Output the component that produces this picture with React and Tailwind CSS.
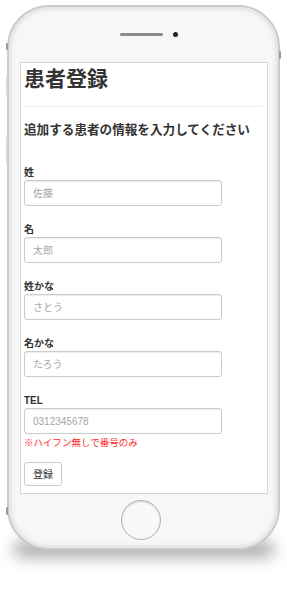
const fields = [
  { label: "姓", placeholder: "佐藤" },
  { label: "名", placeholder: "太郎" },
  { label: "姓かな", placeholder: "さとう" },
  { label: "名かな", placeholder: "たろう" },
  { label: "TEL", placeholder: "0312345678" },
];

function Field({ label, placeholder }) {
  return (
    <div className="flex flex-col">
      <label className="text-[10px] leading-[12px] font-bold text-[#333] mb-[1px]">
        {label}
      </label>
      <input
        type="text"
        placeholder={placeholder}
        className="w-[198px] h-[26px] px-[8px] text-[10px] text-[#555] placeholder:text-[#a5a5a5] bg-white border border-[#ccc] rounded-[3px] shadow-[inset_0_1px_1px_rgba(0,0,0,0.075)] outline-none"
      />
    </div>
  );
}

export default function App() {
  return (
    <div
      className="w-[287px] h-[595px] bg-white overflow-hidden"
      style={{ fontFamily: '"Liberation Sans", "Noto Sans CJK JP", sans-serif' }}
    >
      <div className="relative z-10 ml-[7px] mt-[5px] w-[273px] h-[545px] rounded-[42px] border-2 border-[#cacaca] bg-[#f7f7f7] shadow-[inset_0_0_0_3px_#e8e8e8,inset_0_0_4px_4px_#efefef] flex flex-col">
        {/* side buttons */}
        <div className="absolute left-[-3px] top-[36px] w-[2px] h-[7px] bg-[#9a9a9a] rounded-sm" />
        <div className="absolute left-[-3px] top-[70px] w-[2px] h-[18px] bg-[#d6d6d6] rounded-sm" />
        <div className="absolute left-[-3px] top-[130px] w-[2px] h-[26px] bg-[#d6d6d6] rounded-sm" />
        <div className="absolute left-[-3px] top-[500px] w-[2px] h-[8px] bg-[#9a9a9a] rounded-sm" />
        <div className="absolute right-[-3px] top-[44px] w-[2px] h-[8px] bg-[#9a9a9a] rounded-sm" />

        {/* speaker + camera */}
        <div className="h-[55px] flex items-start pt-[25px] pl-[111px]">
          <div className="flex items-center gap-[10px]">
            <div className="w-[43px] h-[3px] rounded-full bg-[#8a8a8a]" />
            <div className="w-[5px] h-[5px] rounded-full bg-[#222]" />
          </div>
        </div>

        {/* screen */}
        <div className="ml-[11px] w-[248px] h-[432px] bg-white border border-[#d6d6d6] pl-[3px] pr-[4px] pt-[3px] flex flex-col">
          <h1 className="text-[21px] leading-[26px] font-bold text-[#333]">患者登録</h1>
          <div className="mt-[14px] border-t border-[#eee]" />
          <h2 className="mt-[15px] text-[12.6px] leading-[16px] font-bold text-[#333]">
            追加する患者の情報を入力してください
          </h2>
          <div className="mt-[29px] flex flex-col gap-[18px]">
            {fields.map((f) => (
              <Field key={f.label} label={f.label} placeholder={f.placeholder} />
            ))}
          </div>
          <p className="mt-[3px] text-[9.5px] leading-[12px] text-[#ff2a2a]">
            ※ハイフン無しで番号のみ
          </p>
          <button className="mt-[13px] w-[38px] h-[24px] text-[10px] text-[#333] bg-white border border-[#ccc] rounded-[3px]">
            登録
          </button>
        </div>

        {/* home button */}
        <div className="mt-[6px] ml-[112px] w-[40px] h-[40px] rounded-full border-[1.5px] border-[#b0b0b0] bg-[#f9f9f9] shadow-[inset_0_1px_2px_rgba(0,0,0,0.15)]" />
      </div>

      {/* shadow under the phone */}
      <div className="-mt-[8px] mx-auto w-[260px] h-[14px] rounded-full bg-black/40 blur-[8px]" />
    </div>
  );
}
